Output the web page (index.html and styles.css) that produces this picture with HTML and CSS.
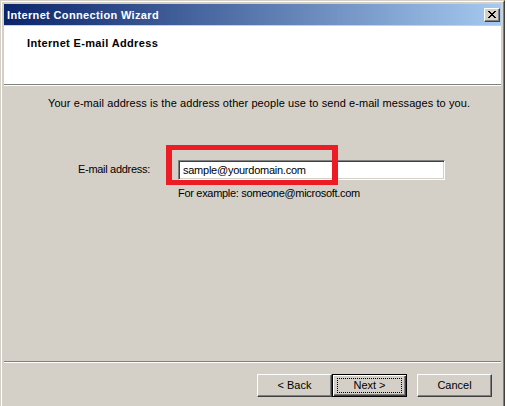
FILE: index.html
```html
<!DOCTYPE html>
<html>
<head>
<meta charset="utf-8">
<link rel="stylesheet" href="styles.css">
</head>
<body>
<div class="window">
  <div class="titlebar">
    <span class="title">Internet Connection Wizard</span>
    <span class="close-btn">
      <svg width="8" height="7" viewBox="0 0 8 7"><path d="M0 0h2v1h1v1h2V1h1V0h2v1H7v1H6v1H5v1h1v1h1v1h1v1H6V6H5V5H3v1H2v1H0V6h1V5h1V4h1V3H2V2H1V1H0z" fill="#000"/></svg>
    </span>
  </div>
  <div class="client">
    <div class="header">
      <div class="header-title">Internet E-mail Address</div>
    </div>
    <div class="body">
      <p class="intro">Your e-mail address is the address other people use to send e-mail messages to you.</p>
      <div class="field-row">
        <span class="label">E-mail address:</span>
        <div class="field-col">
          <div class="input">sample@yourdomain.com</div>
          <div class="hint">For example: someone@microsoft.com</div>
        </div>
      </div>
      <div class="highlight"></div>
    </div>
    <div class="footer">
      <div class="btn">&lt; Back</div>
      <div class="btn default"><span class="focus">Next &gt;</span></div>
      <div class="btn cancel">Cancel</div>
    </div>
  </div>
</div>
</body>
</html>
```
FILE: styles.css
```css
html, body {
  margin: 0;
  padding: 0;
  background: #ffffff;
}
body {
  font-family: "Liberation Sans", Arial, sans-serif;
  font-size: 11px;
  color: #000;
}
.window {
  width: 505px;
  height: 410px;
  box-sizing: border-box;
  background: #d4d0c8;
  border-top: 1px solid #d4d0c8;
  border-left: 1px solid #d4d0c8;
  border-right: 1px solid #404040;
  border-bottom: 1px solid #404040;
  display: flex;
  flex-direction: column;
}
.titlebar {
  height: 21px;
  box-sizing: content-box;
  border-top: 1px solid #fff;
  border-left: 1px solid #fff;
  border-right: 1px solid #808080;
  padding: 2px 2px 0 2px;
  background: linear-gradient(to right, #0a246a, #a6caf0);
  background-clip: content-box;
  display: flex;
  flex-direction: row;
  align-items: center;
  justify-content: space-between;
}
.title {
  color: #fff;
  font-weight: bold;
  font-size: 11px;
  padding-left: 3px;
  letter-spacing: 0.35px;
}
.close-btn {
  width: 16px;
  height: 14px;
  box-sizing: border-box;
  margin-right: 1px;
  background: #d4d0c8;
  border-top: 1px solid #fff;
  border-left: 1px solid #fff;
  border-right: 1px solid #404040;
  border-bottom: 1px solid #404040;
  box-shadow: inset -1px -1px 0 #808080;
  display: flex;
  align-items: center;
  justify-content: center;
}
.close-btn svg { display: block; }
.client {
  flex: 1;
  border-left: 1px solid #fff;
  border-right: 1px solid #808080;
  padding: 1px 2px 0 2px;
  display: flex;
  flex-direction: column;
}
.header {
  height: 59px;
  background: #fff;
  border-bottom: 1px solid #808080;
  box-shadow: 0 1px 0 #fff;
  padding: 11px 0 0 23px;
  box-sizing: border-box;
  flex: none;
}
.header-title {
  font-weight: bold;
  line-height: 13px;
  letter-spacing: 0.35px;
}
.body {
  position: relative;
  margin-top: 1px;
  padding: 11px 0 0 44px;
  border-bottom: 1px solid #808080;
  box-shadow: 0 1px 0 #fff;
  height: 276px;
  flex: none;
  box-sizing: border-box;
}
.intro {
  margin: 0;
  line-height: 13px;
  letter-spacing: 0.08px;
}
.field-row {
  display: grid;
  grid-template-columns: 100px auto;
  margin-top: 50px;
  margin-left: 30px;
}
.label {
  line-height: 13px;
  margin-top: 3px;
  letter-spacing: -0.3px;
}
.input {
  width: 267px;
  height: 20px;
  box-sizing: border-box;
  background: #fff;
  border-top: 1px solid #808080;
  border-left: 1px solid #808080;
  border-right: 1px solid #fff;
  border-bottom: 1px solid #fff;
  box-shadow: inset 1px 1px 0 #404040, inset -1px -1px 0 #d4d0c8;
  padding: 3px 0 0 4px;
  line-height: 13px;
  letter-spacing: -0.25px;
}
.hint {
  margin-top: 7px;
  line-height: 13px;
  letter-spacing: -0.3px;
}
.highlight {
  position: absolute;
  left: 162px;
  top: 59px;
  width: 172px;
  height: 40px;
  box-sizing: border-box;
  border: 5px solid #ed1c24;
  border-left-width: 6px;
  border-right-width: 6px;
}
.footer {
  flex: 1;
  display: flex;
  justify-content: flex-end;
  padding: 11px 9px 0 0;
  margin-top: 1px;
}
.btn {
  width: 75px;
  height: 23px;
  box-sizing: border-box;
  background: #d4d0c8;
  border-top: 1px solid #fff;
  border-left: 1px solid #fff;
  border-right: 1px solid #404040;
  border-bottom: 1px solid #404040;
  box-shadow: inset -1px -1px 0 #808080;
  display: flex;
  align-items: center;
  justify-content: center;
  line-height: 13px;
}
.btn.default {
  border: 1px solid #000;
  box-shadow: inset 1px 1px 0 #fff, inset -1px -1px 0 #404040, inset -2px -2px 0 #808080;
}
.focus {
  width: 65px;
  height: 15px;
  box-sizing: border-box;
  border: 1px dotted #000;
  display: flex;
  align-items: center;
  justify-content: center;
}
.btn.cancel {
  margin-left: 10px;
}
```
